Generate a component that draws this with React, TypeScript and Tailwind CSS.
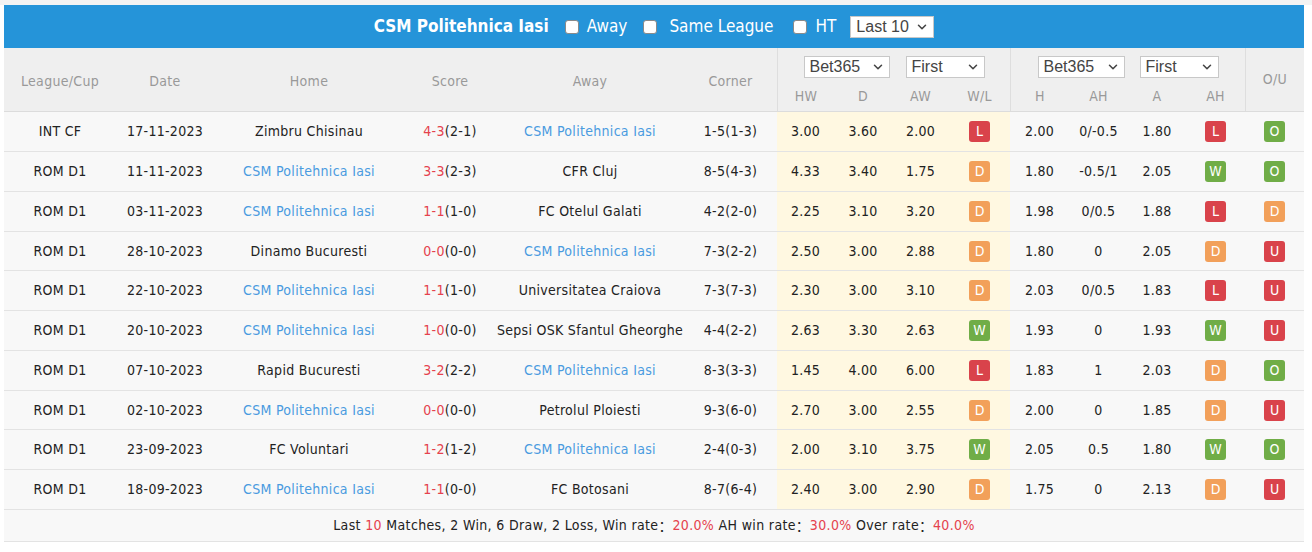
import { ChevronDown } from 'lucide-react';

type Row = {
  league: string;
  date: string;
  home: string;
  score: string;
  ht: string;
  away: string;
  corner: string;
  hw: string;
  d: string;
  aw: string;
  wl: string;
  h: string;
  ah: string;
  a: string;
  ahr: string;
  ou: string;
};

const TEAM = 'CSM Politehnica Iasi';

const rows: Row[] = [
  { league: 'INT CF', date: '17-11-2023', home: 'Zimbru Chisinau', score: '4-3', ht: '(2-1)', away: TEAM, corner: '1-5(1-3)', hw: '3.00', d: '3.60', aw: '2.00', wl: 'L', h: '2.00', ah: '0/-0.5', a: '1.80', ahr: 'L', ou: 'O' },
  { league: 'ROM D1', date: '11-11-2023', home: TEAM, score: '3-3', ht: '(2-3)', away: 'CFR Cluj', corner: '8-5(4-3)', hw: '4.33', d: '3.40', aw: '1.75', wl: 'D', h: '1.80', ah: '-0.5/1', a: '2.05', ahr: 'W', ou: 'O' },
  { league: 'ROM D1', date: '03-11-2023', home: TEAM, score: '1-1', ht: '(1-0)', away: 'FC Otelul Galati', corner: '4-2(2-0)', hw: '2.25', d: '3.10', aw: '3.20', wl: 'D', h: '1.98', ah: '0/0.5', a: '1.88', ahr: 'L', ou: 'D' },
  { league: 'ROM D1', date: '28-10-2023', home: 'Dinamo Bucuresti', score: '0-0', ht: '(0-0)', away: TEAM, corner: '7-3(2-2)', hw: '2.50', d: '3.00', aw: '2.88', wl: 'D', h: '1.80', ah: '0', a: '2.05', ahr: 'D', ou: 'U' },
  { league: 'ROM D1', date: '22-10-2023', home: TEAM, score: '1-1', ht: '(1-0)', away: 'Universitatea Craiova', corner: '7-3(7-3)', hw: '2.30', d: '3.00', aw: '3.10', wl: 'D', h: '2.03', ah: '0/0.5', a: '1.83', ahr: 'L', ou: 'U' },
  { league: 'ROM D1', date: '20-10-2023', home: TEAM, score: '1-0', ht: '(0-0)', away: 'Sepsi OSK Sfantul Gheorghe', corner: '4-4(2-2)', hw: '2.63', d: '3.30', aw: '2.63', wl: 'W', h: '1.93', ah: '0', a: '1.93', ahr: 'W', ou: 'U' },
  { league: 'ROM D1', date: '07-10-2023', home: 'Rapid Bucuresti', score: '3-2', ht: '(2-2)', away: TEAM, corner: '8-3(3-3)', hw: '1.45', d: '4.00', aw: '6.00', wl: 'L', h: '1.83', ah: '1', a: '2.03', ahr: 'D', ou: 'O' },
  { league: 'ROM D1', date: '02-10-2023', home: TEAM, score: '0-0', ht: '(0-0)', away: 'Petrolul Ploiesti', corner: '9-3(6-0)', hw: '2.70', d: '3.00', aw: '2.55', wl: 'D', h: '2.00', ah: '0', a: '1.85', ahr: 'D', ou: 'U' },
  { league: 'ROM D1', date: '23-09-2023', home: 'FC Voluntari', score: '1-2', ht: '(1-2)', away: TEAM, corner: '2-4(0-3)', hw: '2.00', d: '3.10', aw: '3.75', wl: 'W', h: '2.05', ah: '0.5', a: '1.80', ahr: 'W', ou: 'O' },
  { league: 'ROM D1', date: '18-09-2023', home: TEAM, score: '1-1', ht: '(0-0)', away: 'FC Botosani', corner: '8-7(6-4)', hw: '2.40', d: '3.00', aw: '2.90', wl: 'D', h: '1.75', ah: '0', a: '2.13', ahr: 'D', ou: 'U' },
];

const badgeColor: Record<string, string> = {
  W: 'bg-[#70ad47]',
  O: 'bg-[#70ad47]',
  L: 'bg-[#d9434b]',
  U: 'bg-[#d9434b]',
  D: 'bg-[#f2a05a]',
};

const cols =
  'grid grid-cols-[112px_98px_190px_92px_188px_93px_57px_58px_57px_61px_59px_59px_58px_59px_59px]';

const Badge = ({ v }: { v: string }) => (
  <span className={`w-[21px] h-[21px] rounded-[3px] text-white flex items-center justify-center text-[14px] tracking-normal ${badgeColor[v]}`}>
    {v}
  </span>
);

const Select = ({ label, w }: { label: string; w: string }) => (
  <div
    className={`${w} h-[22px] bg-white border border-[#c8c8c8] flex items-center justify-between pl-[5px] pr-[4px] text-[16px] tracking-normal text-[#444] font-['Liberation_Sans',Arial,sans-serif]`}
  >
    <span>{label}</span>
    <ChevronDown className="w-[14px] h-[14px] text-[#444]" strokeWidth={2.6} />
  </div>
);

const Check = () => <span className="w-[14px] h-[14px] rounded-[3px] bg-white border border-[#8a8a8a]" />;

const Team = ({ name }: { name: string }) => (
  <span className={name === TEAM ? 'text-[#4a9be0]' : 'text-[#222]'}>{name}</span>
);

const Colon = () => <span className="font-['Noto_Sans_CJK_SC',sans-serif] text-[14px] tracking-normal">：</span>;

export default function App() {
  return (
    <div className="min-h-screen bg-white font-['DejaVu_Sans_Condensed','DejaVu_Sans',Tahoma,sans-serif] [font-stretch:condensed] text-[14px] text-[#222]">
      <div className="h-[5px] bg-[#f3f3f3]" />
      <div className="ml-[4px] w-[1300px]">
        {/* title bar */}
        <div className="h-[43px] bg-[#2594d9] flex items-center justify-center text-white text-[17px]">
          <span className="font-bold mr-[16px]">CSM Politehnica Iasi</span>
          <Check />
          <span className="ml-[8px] mr-[16px]">Away</span>
          <Check />
          <span className="ml-[12px] mr-[20px]">Same League</span>
          <Check />
          <span className="ml-[8px] mr-[14px]">HT</span>
          <Select label="Last 10" w="w-[84px]" />
        </div>

        {/* column header */}
        <div className={`${cols} grid-rows-[37px_26px] bg-[#efefef] border-b border-[#dcdcdc] text-[#999] tracking-[0.3px]`}>
          <div className="row-span-2 flex items-center justify-center pt-[4px]">League/Cup</div>
          <div className="row-span-2 flex items-center justify-center pt-[4px]">Date</div>
          <div className="row-span-2 flex items-center justify-center pt-[4px]">Home</div>
          <div className="row-span-2 flex items-center justify-center pt-[4px]">Score</div>
          <div className="row-span-2 flex items-center justify-center pt-[4px]">Away</div>
          <div className="row-span-2 flex items-center justify-center pt-[4px]">Corner</div>
          <div className="col-span-4 border-l border-[#dedede] flex items-end justify-center gap-[16px] pb-[7px]">
            <Select label="Bet365" w="w-[86px]" />
            <Select label="First" w="w-[79px]" />
          </div>
          <div className="col-span-4 border-l border-[#dedede] flex items-end justify-center gap-[15px] pb-[7px]">
            <Select label="Bet365" w="w-[87px]" />
            <Select label="First" w="w-[79px]" />
          </div>
          <div className="row-span-2 col-start-15 row-start-1 border-l border-[#dedede] flex items-center justify-center">O/U</div>
          <div className="col-start-7 border-l border-[#dedede] flex items-start justify-center pt-[1px]">HW</div>
          <div className="flex items-start justify-center pt-[1px]">D</div>
          <div className="flex items-start justify-center pt-[1px]">AW</div>
          <div className="flex items-start justify-center pt-[1px]">W/L</div>
          <div className="border-l border-[#dedede] flex items-start justify-center pt-[1px]">H</div>
          <div className="flex items-start justify-center pt-[1px]">AH</div>
          <div className="flex items-start justify-center pt-[1px]">A</div>
          <div className="flex items-start justify-center pt-[1px]">AH</div>
        </div>

        {/* rows */}
        {rows.map((r, i) => (
          <div key={i} className={`${cols} ${i % 4 === 3 ? 'h-[39px]' : 'h-[40px]'} bg-[#f8f8f8] border-b border-[#e3e3e3] tracking-[0.3px] [&>div]:flex [&>div]:items-center [&>div]:justify-center`}>
            <div>{r.league}</div>
            <div>{r.date}</div>
            <div><Team name={r.home} /></div>
            <div>
              <span className="text-[#e5424d]">{r.score}</span>
              <span>{r.ht}</span>
            </div>
            <div><Team name={r.away} /></div>
            <div>{r.corner}</div>
            <div className="bg-[#fff8e1]">{r.hw}</div>
            <div className="bg-[#fff8e1]">{r.d}</div>
            <div className="bg-[#fff8e1]">{r.aw}</div>
            <div className="bg-[#fff8e1]"><Badge v={r.wl} /></div>
            <div>{r.h}</div>
            <div>{r.ah}</div>
            <div>{r.a}</div>
            <div><Badge v={r.ahr} /></div>
            <div><Badge v={r.ou} /></div>
          </div>
        ))}

        {/* summary */}
        <div className="h-[32px] bg-[#f8f8f8] border-b border-[#e3e3e3] flex items-center justify-center whitespace-pre tracking-[0.35px]">
          <span>Last </span>
          <span className="text-[#e5424d]">10</span>
          <span> Matches, 2 Win, 6 Draw, 2 Loss, Win rate</span>
          <Colon />
          <span className="text-[#e5424d]">20.0%</span>
          <span> AH win rate</span>
          <Colon />
          <span className="text-[#e5424d]">30.0%</span>
          <span> Over rate</span>
          <Colon />
          <span className="text-[#e5424d]">40.0%</span>
        </div>
      </div>
    </div>
  );
}
